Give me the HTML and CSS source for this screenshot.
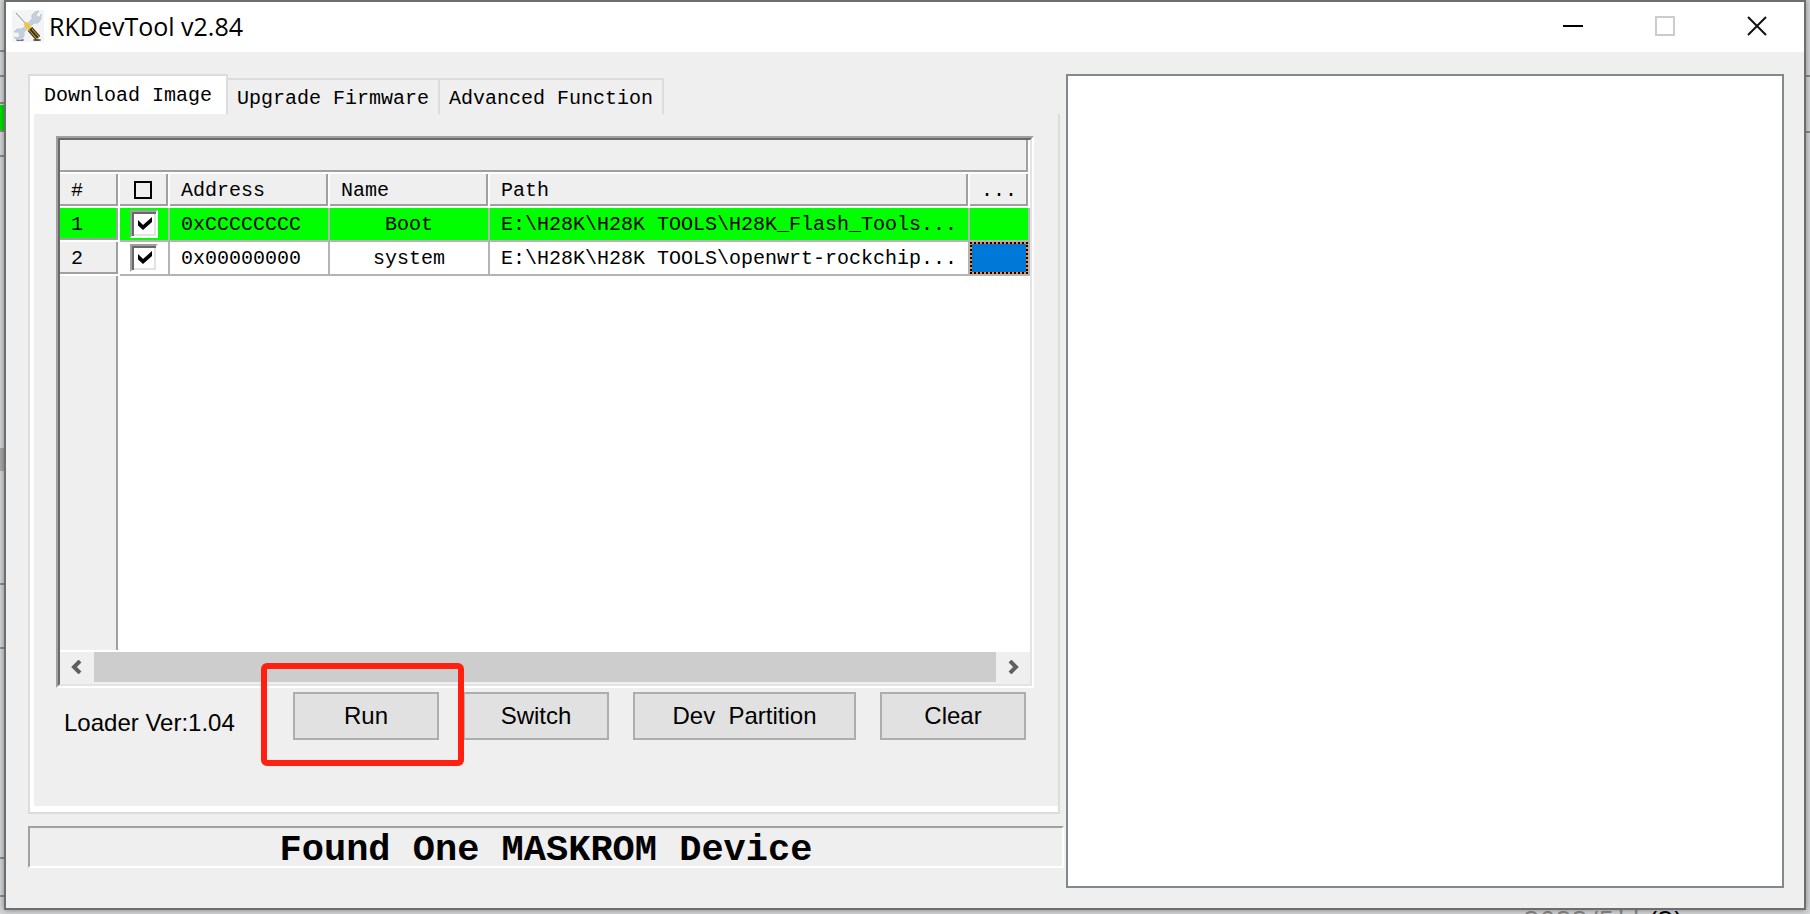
FILE: index.html
```
<!DOCTYPE html>
<html lang="en">
<head>
  <meta charset="UTF-8">
  <meta name="viewport" content="width=device-width, initial-scale=1.0">
  <title>RKDevTool v2.84</title>
  <link rel="stylesheet" href="styles.css">
</head>
<body>
  <!-- bits of the windows behind -->
  <div class="behind" aria-hidden="true">
    <i class="line l1"></i>
    <i class="line l2"></i>
    <i class="line l3"></i>
    <i class="green"></i>
    <i class="line l4"></i>
    <i class="line l5"></i>
    <i class="grey"></i>
    <i class="line l6"></i>
    <i class="line l7"></i>
    <i class="line l8"></i>
    <i class="line l9"></i>
    <i class="line right r1"></i>
    <i class="line right r2"></i>
    <div class="caption"><span>2022/5月</span> (2)</div>
  </div>

  <div class="window">
    <header class="titlebar">
      <svg class="app-icon" viewBox="0 0 32 32" aria-hidden="true">
        <rect width="32" height="32" fill="#f3f4f6"/>
        <ellipse cx="8" cy="30" rx="4" ry="1" fill="#666"/>
        <ellipse cx="25" cy="30" rx="4" ry="1" fill="#555"/>
        <path d="M2 27l4 1 2-3-2-3-4 0 3-3 5 0L20 9l0-4 3-3 4-1-3 4 1 2 3 0 1-3 0 5-3 4-4 0L12 22l0 4-3 4-5-1z" fill="#c6cfdc" stroke="#c0c8d4" stroke-width="1"/>
        <path d="M4 3l10 11" stroke="#8c8c8c" stroke-width="1"/>
        <path d="M13 13l6 7" stroke="#f3c62f" stroke-width="4"/>
        <path d="M18 19l8 9" stroke="#3a3420" stroke-width="6"/>
        <path d="M17 20l8 9M20 19l7 8" stroke="#e0b32a" stroke-width="1"/>
      </svg>
      <h1>RKDevTool v2.84</h1>
      <div class="window-buttons">
        <button type="button" aria-label="Minimize">
          <svg viewBox="0 0 20 20"><path d="M0 10h20" stroke="#000" stroke-width="2"/></svg>
        </button>
        <button type="button" aria-label="Maximize" disabled>
          <svg viewBox="0 0 20 20"><path d="M1 1h18v18H1z" fill="none" stroke="#ccc" stroke-width="2"/></svg>
        </button>
        <button type="button" aria-label="Close">
          <svg viewBox="0 0 20 20"><path d="M1 1l18 18M19 1L1 19" stroke="#111" stroke-width="2"/></svg>
        </button>
      </div>
    </header>

    <main class="content">
      <div class="left">
        <div class="tabs" role="tablist">
          <button type="button" class="tab active" role="tab" aria-selected="true">Download Image</button>
          <button type="button" class="tab" role="tab" aria-selected="false">Upgrade Firmware</button>
          <button type="button" class="tab" role="tab" aria-selected="false">Advanced Function</button>
        </div>

        <section class="panel">
          <div class="grid">
            <div class="grid-body">
              <table>
                <colgroup>
                  <col class="col-num">
                  <col class="col-check">
                  <col class="col-text">
                  <col class="col-text">
                  <col>
                  <col class="col-num">
                </colgroup>
                <thead>
                  <tr><th colspan="6"></th></tr>
                  <tr>
                    <th>#</th>
                    <th class="check"><input type="checkbox" class="check-all" aria-label="Select all"></th>
                    <th>Address</th>
                    <th>Name</th>
                    <th>Path</th>
                    <th>...</th>
                  </tr>
                </thead>
                <tbody>
                  <tr class="found">
                    <th>1</th>
                    <td class="check"><input type="checkbox" aria-label="Row 1" checked></td>
                    <td>0xCCCCCCCC</td>
                    <td class="name">Boot</td>
                    <td>E:\H28K\H28K TOOLS\H28K_Flash_Tools...</td>
                    <td></td>
                  </tr>
                  <tr>
                    <th>2</th>
                    <td class="check"><input type="checkbox" aria-label="Row 2" checked></td>
                    <td>0x00000000</td>
                    <td class="name">system</td>
                    <td>E:\H28K\H28K TOOLS\openwrt-rockchip...</td>
                    <td class="selected"><div class="focus"></div></td>
                  </tr>
                </tbody>
              </table>
              <div class="gutter"></div>
            </div>
            <div class="scrollbar">
              <button type="button" aria-label="Scroll left">
                <svg viewBox="0 0 12 14"><path d="M9 1L3 7l6 6" fill="none" stroke="#606060" stroke-width="4"/></svg>
              </button>
              <div class="thumb"></div>
              <button type="button" aria-label="Scroll right">
                <svg viewBox="0 0 12 14"><path d="M3 1l6 6-6 6" fill="none" stroke="#606060" stroke-width="4"/></svg>
              </button>
            </div>
          </div>

          <div class="actions">
            <span class="loader">Loader Ver:1.04</span>
            <div class="run">
              <button type="button" class="btn">Run</button>
              <div class="highlight"></div>
            </div>
            <button type="button" class="btn">Switch</button>
            <button type="button" class="btn wide">Dev  Partition</button>
            <button type="button" class="btn">Clear</button>
          </div>
        </section>

        <div class="status" role="status">Found One MASKROM Device</div>
      </div>

      <div class="log" role="log"></div>
    </main>
  </div>
</body>
</html>
```

FILE: styles.css
```
* {
  margin: 0;
  padding: 0;
  box-sizing: border-box;
}

body {
  height: 100vh;
  display: flex;
  overflow: hidden;
  background: #d4d5d6;
  color: #000;
  font: 20px/24px "Liberation Mono", monospace;
}

button {
  border: none;
  background: none;
  color: inherit;
  font: inherit;
}

/* background windows */
.behind i {
  position: absolute;
  left: 0;
  width: 4px;
}

.behind .line {
  height: 2px;
  background: #8c8c8c;
}

.behind .l1 { top: 50px; }
.behind .l2 { top: 75px; }
.behind .l3 { top: 102px; }
.behind .l4 { top: 130px; }
.behind .l5 { top: 155px; }
.behind .l6 { top: 583px; }
.behind .l7 { top: 647px; }
.behind .l8 { top: 857px; }
.behind .l9 { top: 895px; }

.behind .green {
  top: 105px;
  height: 25px;
  background: #00e000;
}

.behind .grey {
  top: 448px;
  height: 23px;
  background: #a8a8a8;
}

.behind .right {
  left: auto;
  right: 0;
}

.behind .r1 { top: 75px; }
.behind .r2 { top: 131px; }

.behind .caption {
  position: absolute;
  right: 128px;
  bottom: -22px;
  font: 28px/32px "Open Sans", "Noto Sans CJK SC", sans-serif;
  white-space: nowrap;
}

.behind .caption span {
  color: #888;
}

/* window */
.window {
  position: relative;
  flex: 1;
  display: flex;
  flex-direction: column;
  margin: 0 4px 4px;
  border: 2px solid #6e6e6e;
  background: #efefef;
  box-shadow: 0 0 6px rgba(0, 0, 0, 0.4);
}

.titlebar {
  height: 50px;
  display: flex;
  align-items: center;
  gap: 5px;
  padding: 0 1px 3px 6px;
  background: #fff;
}

.app-icon {
  width: 32px;
  height: 32px;
}

.titlebar h1 {
  font: 25px/32px "Open Sans", sans-serif;
}

.window-buttons {
  display: flex;
  height: 100%;
  margin-left: auto;
}

.window-buttons button {
  width: 92px;
  display: flex;
  align-items: center;
  justify-content: center;
}

.window-buttons svg {
  width: 20px;
  height: 20px;
}

.content {
  flex: 1;
  display: grid;
  grid-template-columns: 1036fr 718fr;
  gap: 2px;
  padding: 22px 20px 20px 22px;
}

.left {
  display: flex;
  flex-direction: column;
  padding-bottom: 20px;
}

.log {
  border: 2px solid #828790;
  background: #fff;
}

/* tabs */
.tabs {
  display: flex;
  align-items: flex-end;
}

.tab {
  height: 36px;
  padding: 4px 9px 0;
  border-top: 2px solid #dcdcdc;
  border-right: 2px solid #dcdcdc;
  white-space: nowrap;
}

.tab.active {
  height: 40px;
  padding: 2px 14px 0;
  border-left: 2px solid #dcdcdc;
  background: #fff;
}

.panel {
  flex: 1;
  display: flex;
  flex-direction: column;
  margin-right: 4px;
  padding: 22px 24px 72px 26px;
  border: 2px solid #dcdcdc;
  border-top: none;
  box-shadow: inset 4px -6px #fff;
}

/* grid */
.grid {
  flex: 1;
  display: flex;
  flex-direction: column;
  border: 2px solid;
  border-color: #a0a0a0 #fff #fff #a0a0a0;
}

.grid-body {
  flex: 1;
  display: flex;
  flex-direction: column;
  padding-bottom: 2px;
  border: 2px solid;
  border-color: #696969 #e3e3e3 #fff #696969;
  border-bottom: none;
  background: #fff;
}

table {
  width: 100%;
  table-layout: fixed;
  border-spacing: 0;
}

.col-num { width: 60px; }
.col-check { width: 50px; }
.col-text { width: 160px; }

th,
td {
  height: 34px;
  padding: 2px 0 0 11px;
  font-weight: normal;
  text-align: left;
  white-space: nowrap;
  overflow: hidden;
}

th {
  border-right: 2px solid #fff;
  border-bottom: 2px solid #fff;
  background: #efefef;
  box-shadow: inset -2px -2px #a0a0a0;
}

td {
  border-right: 2px solid #b4b4b4;
  border-bottom: 2px solid #b4b4b4;
}

.found th,
.found td {
  background-color: #0f0;
}

.name {
  padding-left: 0;
  text-align: center;
}

.check {
  padding: 0 0 0 10px;
}

.check input {
  display: block;
  appearance: none;
  width: 28px;
  height: 28px;
  border: 2px solid;
  border-color: #a0a0a0 #fff #fff #a0a0a0;
  background: #fff;
  box-shadow: inset 2px 2px #696969, inset -2px -2px #e3e3e3;
}

.check input:checked::before {
  content: "";
  display: block;
  width: 14px;
  height: 13px;
  margin: 5px 6px;
  background: #000;
  clip-path: polygon(0 24%, 36% 62%, 100% 0, 100% 38%, 36% 100%, 0 66%);
}

.check .check-all {
  width: 18px;
  height: 18px;
  margin-left: 4px;
  border: 2px solid #000;
  background: none;
  box-shadow: none;
}

.selected {
  padding: 0;
}

.focus {
  height: 32px;
  border: 2px dotted #000;
  background: linear-gradient(#0078d7, #0078d7) padding-box, #ff8728 border-box;
}

.gutter {
  flex: 1;
  width: 58px;
  border-right: 2px solid #a0a0a0;
  background: #efefef;
}

.scrollbar {
  height: 34px;
  display: flex;
  padding-bottom: 2px;
  border: 2px solid;
  border-color: transparent #e3e3e3 #e3e3e3 #696969;
  border-top: none;
  background: #efefef;
}

.scrollbar button {
  width: 34px;
}

.scrollbar svg {
  display: block;
  width: 12px;
  height: 14px;
  margin: 0 auto;
}

.thumb {
  flex: 1;
  background: #cdcdcd;
}

/* buttons */
.actions {
  display: flex;
  justify-content: flex-end;
  gap: 24px;
  padding: 4px 8px 0;
  font: 24px/28px "Liberation Sans", Arial, sans-serif;
}

.loader {
  margin-right: auto;
  padding-top: 17px;
}

.btn {
  width: 146px;
  height: 48px;
  border: 2px solid #adadad;
  background: #e1e1e1;
  white-space: pre;
}

.btn.wide {
  width: 223px;
}

.run {
  position: relative;
}

.highlight {
  position: absolute;
  top: -29px;
  left: -32px;
  width: 203px;
  height: 103px;
  border: 6px solid #ff2011;
  border-radius: 6px;
  pointer-events: none;
}

.status {
  margin-top: 12px;
  padding-top: 6px;
  border: 2px solid;
  border-color: #a0a0a0 #fff #fff #a0a0a0;
  font-size: 37px;
  font-weight: bold;
  line-height: 32px;
  text-align: center;
}
```
